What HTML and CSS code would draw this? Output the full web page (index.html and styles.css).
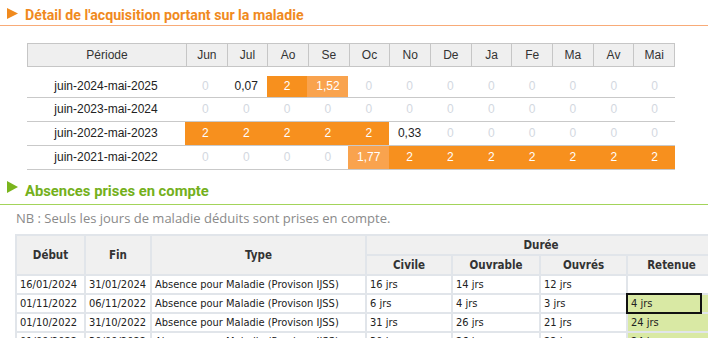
FILE: index.html
```html
<!DOCTYPE html>
<html lang="fr">
<head>
<meta charset="utf-8">
<link rel="stylesheet" href="styles.css">
</head>
<body>
<section class="sec sec-orange">
  <div class="sec-head">
    <svg class="tri" width="11" height="11" viewBox="0 0 11 11"><polygon points="0,0 11,5.5 0,11"/></svg>
    <h2 class="sec-title">Détail de l'acquisition portant sur la maladie</h2>
  </div>
  <div class="acq">
    <div class="acq-head">
      <div class="hc">Période</div>
      <div class="hc">Jun</div><div class="hc">Jul</div><div class="hc">Ao</div><div class="hc">Se</div>
      <div class="hc">Oc</div><div class="hc">No</div><div class="hc">De</div><div class="hc">Ja</div>
      <div class="hc">Fe</div><div class="hc">Ma</div><div class="hc">Av</div><div class="hc">Mai</div>
    </div>
    <div class="acq-row first">
      <div class="per">juin-2024-mai-2025</div>
      <div class="z">0</div><div class="v">0,07</div><div class="o">2</div><div class="p">1,52</div>
      <div class="z">0</div><div class="z">0</div><div class="z">0</div><div class="z">0</div>
      <div class="z">0</div><div class="z">0</div><div class="z">0</div><div class="z">0</div>
    </div>
    <div class="acq-row">
      <div class="per">juin-2023-mai-2024</div>
      <div class="z">0</div><div class="z">0</div><div class="z">0</div><div class="z">0</div>
      <div class="z">0</div><div class="z">0</div><div class="z">0</div><div class="z">0</div>
      <div class="z">0</div><div class="z">0</div><div class="z">0</div><div class="z">0</div>
    </div>
    <div class="acq-row">
      <div class="per">juin-2022-mai-2023</div>
      <div class="o">2</div><div class="o">2</div><div class="o">2</div><div class="o">2</div>
      <div class="o">2</div><div class="v">0,33</div><div class="z">0</div><div class="z">0</div>
      <div class="z">0</div><div class="z">0</div><div class="z">0</div><div class="z">0</div>
    </div>
    <div class="acq-row">
      <div class="per">juin-2021-mai-2022</div>
      <div class="z">0</div><div class="z">0</div><div class="z">0</div><div class="z">0</div>
      <div class="p">1,77</div><div class="o">2</div><div class="o">2</div><div class="o">2</div>
      <div class="o">2</div><div class="o">2</div><div class="o">2</div><div class="o">2</div>
    </div>
  </div>
</section>

<section class="sec sec-green">
  <div class="sec-head">
    <svg class="tri" width="11" height="12" viewBox="0 0 11 12"><polygon points="0,0 11,6 0,12"/></svg>
    <h2 class="sec-title">Absences prises en compte</h2>
  </div>
  <p class="nb">NB : Seuls les jours de maladie déduits sont prises en compte.</p>
  <table class="abs">
    <colgroup>
      <col class="c-deb"><col class="c-fin"><col class="c-type"><col class="c-civ"><col class="c-ouvb"><col class="c-ouvs"><col class="c-ret">
    </colgroup>
    <thead>
      <tr class="h1">
        <th rowspan="2">Début</th><th rowspan="2">Fin</th><th rowspan="2">Type</th><th colspan="4">Durée</th>
      </tr>
      <tr class="h2">
        <th>Civile</th><th>Ouvrable</th><th>Ouvrés</th><th>Retenue</th>
      </tr>
    </thead>
    <tbody>
      <tr>
        <td>16/01/2024</td><td>31/01/2024</td><td>Absence pour Maladie (Provison IJSS)</td>
        <td>16 jrs</td><td>14 jrs</td><td>12 jrs</td><td></td>
      </tr>
      <tr>
        <td>01/11/2022</td><td>06/11/2022</td><td>Absence pour Maladie (Provison IJSS)</td>
        <td>6 jrs</td><td>4 jrs</td><td>3 jrs</td><td class="ret sel"><span class="selbox"></span>4 jrs</td>
      </tr>
      <tr>
        <td>01/10/2022</td><td>31/10/2022</td><td>Absence pour Maladie (Provison IJSS)</td>
        <td>31 jrs</td><td>26 jrs</td><td>21 jrs</td><td class="ret">24 jrs</td>
      </tr>
      <tr>
        <td>01/09/2022</td><td>30/09/2022</td><td>Absence pour Maladie (Provison IJSS)</td>
        <td>30 jrs</td><td>26 jrs</td><td>22 jrs</td><td class="ret">24 jrs</td>
      </tr>
    </tbody>
  </table>
</section>
</body>
</html>
```

FILE: styles.css
```css
html, body {
  margin: 0;
  padding: 0;
  background: #ffffff;
}
body {
  width: 708px;
  height: 338px;
  overflow: hidden;
  font-family: "Liberation Sans", Arial, sans-serif;
}

.sec-head {
  display: flex;
  align-items: flex-start;
  gap: 7px;
  padding-left: 7px;
  box-sizing: border-box;
}
.sec-title {
  margin: -2px 0 0 0;
  font-family: Roboto, "Open Sans", sans-serif;
  font-weight: 700;
  font-size: 14.2px;
  line-height: 18px;
}
.sec-orange .sec-head {
  height: 26px;
  padding-top: 8px;
  border-bottom: 1px solid #f8ab78;
}
.sec-orange .tri polygon { fill: #f08a1e; }
.sec-orange .sec-title { color: #f08a1e; }

.sec-green .sec-head {
  height: 35px;
  padding-top: 11px;
  border-bottom: 1px solid #a3d45a;
}
.sec-green .tri polygon { fill: #7ab51d; }
.sec-green .sec-title { color: #74b01c; margin-top: 1px; font-size: 14.8px; }

/* acquisition table */
.acq {
  margin: 17px 0 0 27px;
  width: 648px;
  font-size: 12px;
}
.acq-head, .acq-row {
  display: grid;
  grid-template-columns: 158px repeat(12, 1fr);
}
.acq-head {
  background: #efefef;
  border: 1px solid #c6c6c6;
  height: 24px;
  box-sizing: border-box;
  color: #333;
}
.hc {
  line-height: 22px;
  text-align: center;
  border-left: 1px solid #c6c6c6;
}
.hc:first-child { border-left: none; }

.acq-row {
  height: 24px;
  box-sizing: border-box;
  border-bottom: 1px solid #c9c9c9;
}
.acq-row.first {
  margin-top: 9px;
  height: 22px;
}
.acq-row > div {
  text-align: center;
  line-height: 23px;
}
.acq-row.first > div { line-height: 21px; }
.per { color: #222; }
.z { color: #d3d8df; }
.v { color: #222; }
.o { background: #f7901e; color: #fff; }
.p { background: #f9a34e; color: #fff; }

/* absences */
.nb {
  margin: 4px 0 0 16px;
  font-family: "Open Sans", sans-serif;
  font-size: 13px;
  line-height: 18px;
  color: #8a8a8a;
}
.abs {
  margin: 7px 0 0 15px;
  border-collapse: collapse;
  table-layout: fixed;
  width: 700px;
  font-family: "DejaVu Sans Condensed", "DejaVu Sans", sans-serif;
  font-stretch: condensed;
  font-size: 11px;
  color: #222;
}
.c-deb { width: 69px; }
.c-fin { width: 66px; }
.c-type { width: 215px; }
.c-civ { width: 86px; }
.c-ouvb { width: 88px; }
.c-ouvs { width: 87px; }
.c-ret { width: 89px; }
.abs th, .abs td {
  border: 2px solid #e1e5ea;
  padding: 0 3px;
  white-space: nowrap;
  overflow: visible;
}
.abs th {
  background: #f0f0f0;
  font-weight: 700;
  font-size: 11.5px;
  color: #333;
  text-align: center;
  height: 18px;
  line-height: 18px;
}
.abs td {
  height: 17px;
  line-height: 17px;
  text-align: left;
}
.abs td.ret { background: #d9e9a4; }
.abs td.sel { position: relative; }
.selbox {
  position: absolute;
  left: -2px;
  top: -2px;
  width: 72px;
  height: 17px;
  border: 2px solid #111;
}
```
